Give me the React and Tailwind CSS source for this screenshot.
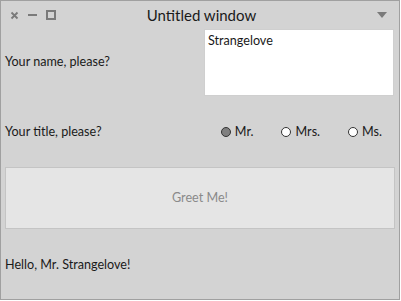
import { useState } from "react";

export default function App() {

    const [name, setName] = useState("Strangelove");
    const [title, setTitle] = useState("Mr.");

    const titles = ["Mr.", "Mrs.", "Ms."];

    return (

        <div
            className="w-[400px] h-[300px] border border-[#a0a0a0] bg-[#d3d3d3] flex flex-col text-[#1a1a1a]"
            style={{ fontFamily: "Lato, 'Open Sans', sans-serif" }}
        >

            {/* TITLE BAR */}
            <div className="h-[28px] flex items-center px-[9px] relative shrink-0">

                <div className="flex items-center gap-[9px] text-[#7a7a7a]">
                    <svg width="9" height="9" viewBox="0 0 9 9">
                        <path d="M1.5 1.5 L7.5 7.5 M7.5 1.5 L1.5 7.5" stroke="#7a7a7a" strokeWidth="1.8" />
                    </svg>
                    <div className="w-[9px] h-[2px] bg-[#7a7a7a]" />
                    <div className="w-[10px] h-[10px] border-2 border-[#7a7a7a]" />
                </div>

                <div className="flex-1 text-center text-[15px] text-[#1a1a1a] pr-[30px]">
                    Untitled window
                </div>

                <svg width="10" height="6" viewBox="0 0 10 6" className="mr-[3px]">
                    <path d="M0 0 L10 0 L5 6 Z" fill="#7a7a7a" />
                </svg>

            </div>

            {/* NAME ROW */}
            <div className="flex items-center pl-[4px] pr-[5px] h-[67px]">

                <span className="text-[12.6px] flex-1">Your name, please?</span>

                <textarea
                    value={name}
                    onChange={(e) => setName(e.target.value)}
                    className="w-[190px] h-[67px] bg-white border border-[#cfcfcf] px-[3px] py-[2px] text-[12.6px] resize-none outline-none"
                />

            </div>

            {/* TITLE ROW */}
            <div className="flex items-center pl-[4px] pt-[1px] h-[71px]">

                <span className="text-[12.6px] flex-1">Your title, please?</span>

                <div className="flex items-center gap-[28px] mr-[17px]">
                    {titles.map((t) => (
                        <label
                            key={t}
                            onClick={() => setTitle(t)}
                            className="flex items-center gap-[4px] text-[12.6px] cursor-pointer"
                        >
                            <span
                                className={
                                    t === title
                                        ? "w-[10px] h-[10px] rounded-full border border-[#333] bg-[#808080]"
                                        : "w-[10px] h-[10px] rounded-full border border-[#333] bg-white"
                                }
                            />
                            {t}
                        </label>
                    ))}
                </div>

            </div>

            {/* BUTTON */}
            <div className="px-[4px]">
                <button className="w-full h-[62px] bg-[#e5e5e5] border border-[#c4c4c4] text-[12.6px] text-[#8a8a8a]">
                    Greet Me!
                </button>
            </div>

            {/* GREETING */}
            <div className="flex-1 flex items-center pl-[4px] pt-[3px] text-[12.6px]">
                Hello, {title} {name}!
            </div>

        </div>
    );
}
